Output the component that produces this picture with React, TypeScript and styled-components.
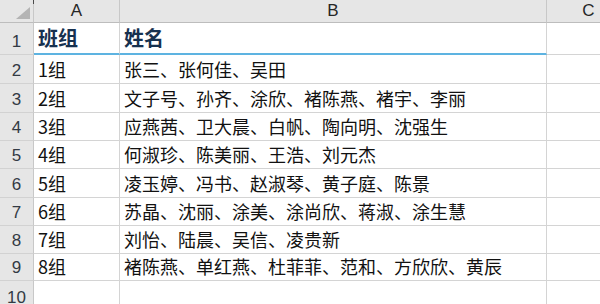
import React from 'react';
import styled, { createGlobalStyle } from 'styled-components';

const GlobalStyle = createGlobalStyle`
  html, body {
    margin: 0;
    padding: 0;
    background: #ffffff;
    overflow: hidden;
  }
`;

const rows = [
  { group: '1组', names: '张三、张何佳、吴田' },
  { group: '2组', names: '文子号、孙齐、涂欣、褚陈燕、褚宇、李丽' },
  { group: '3组', names: '应燕茜、卫大晨、白帆、陶向明、沈强生' },
  { group: '4组', names: '何淑珍、陈美丽、王浩、刘元杰' },
  { group: '5组', names: '凌玉婷、冯书、赵淑琴、黄子庭、陈景' },
  { group: '6组', names: '苏晶、沈丽、涂美、涂尚欣、蒋淑、涂生慧' },
  { group: '7组', names: '刘怡、陆晨、吴信、凌贵新' },
  { group: '8组', names: '褚陈燕、单红燕、杜菲菲、范和、方欣欣、黄辰' },
];

const Sheet = styled.div`
  display: grid;
  grid-template-columns: 34px 86px 427px 84px;
  grid-template-rows: 23px 32px 29px 29px 28px 28px 29px 28px 28px 27px 30px;
  width: 600px;
  height: 304px;
  overflow: hidden;
  font-family: "Noto Sans CJK SC", "Microsoft YaHei", sans-serif;
`;

const Corner = styled.div`
  position: relative;
  background: #e6e6e6;
  border-right: 1px solid #c8c8c8;
  border-bottom: 1px solid #bdbdbd;

  &::before {
    content: '';
    position: absolute;
    right: -1px;
    top: 0;
    width: 1px;
    height: 4px;
    background: #4a4a4a;
  }

  &::after {
    content: '';
    position: absolute;
    right: 3px;
    bottom: 3px;
    width: 0;
    height: 0;
    border-left: 14px solid transparent;
    border-bottom: 12px solid #b4b4b4;
  }
`;

const ColHead = styled.div`
  background: #e6e6e6;
  border-right: 1px solid #c8c8c8;
  border-bottom: 1px solid #bdbdbd;
  display: flex;
  align-items: flex-end;
  justify-content: center;
  padding-bottom: 1px;
  font-family: "Liberation Sans", "Noto Sans", sans-serif;
  font-size: 17px;
  line-height: 20px;
  color: #262626;
`;

const RowHead = styled.div`
  background: #e6e6e6;
  border-right: 1px solid #c8c8c8;
  border-bottom: 1px solid #d2d2d2;
  display: flex;
  align-items: flex-end;
  justify-content: center;
  padding-bottom: 2px;
  font-family: "Liberation Sans", "Noto Sans", sans-serif;
  font-size: 17px;
  line-height: 20px;
  color: #333a44;
`;

const Cell = styled.div<{ $title?: boolean; $accent?: boolean }>`
  border-right: 1px solid #d4d4d4;
  border-bottom: ${p => (p.$accent ? '2px solid #5db3e1' : '1px solid #d4d4d4')};
  display: flex;
  align-items: flex-end;
  padding: 0 0 ${p => (p.$title ? '3px' : '2px')} 4px;
  white-space: nowrap;
  overflow: hidden;
  font-size: ${p => (p.$title ? '20px' : '18px')};
  font-weight: ${p => (p.$title ? 700 : 400)};
  line-height: 24px;
  color: ${p => (p.$title ? '#17314f' : '#111111')};
`;

export default function App() {
  return (
    <>
      <GlobalStyle />
      <Sheet>
        <Corner />
        <ColHead>A</ColHead>
        <ColHead>B</ColHead>
        <ColHead>C</ColHead>

        <RowHead>1</RowHead>
        <Cell $title $accent>班组</Cell>
        <Cell $title $accent>姓名</Cell>
        <Cell />

        {rows.map((r, i) => (
          <React.Fragment key={r.group}>
            <RowHead>{i + 2}</RowHead>
            <Cell>{r.group}</Cell>
            <Cell>{r.names}</Cell>
            <Cell />
          </React.Fragment>
        ))}

        <RowHead>10</RowHead>
        <Cell />
        <Cell />
        <Cell />
      </Sheet>
    </>
  );
}
